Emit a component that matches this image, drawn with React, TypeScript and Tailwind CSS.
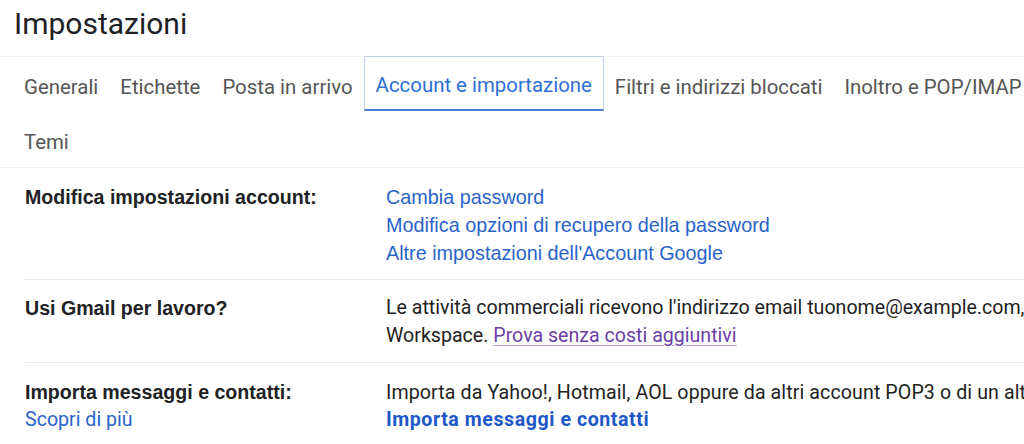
const tabs = [
  "Generali",
  "Etichette",
  "Posta in arrivo",
  "Account e importazione",
  "Filtri e indirizzi bloccati",
  "Inoltro e POP/IMAP",
  "Temi",
];

const ACTIVE = "Account e importazione";

const Label = ({ children }: { children: React.ReactNode }) => (
  <div className="w-[361px] shrink-0 font-['Liberation_Sans',Arial,sans-serif] text-[19.6px] font-bold text-[#202124]">
    {children}
  </div>
);

export default function App() {
  return (
    <div className="w-[1024px] h-[444px] overflow-hidden bg-white font-['Roboto',Arial,sans-serif]">
      <h1 className="pl-[14px] pt-[4px] h-[56px] text-[30px] leading-[40px] text-[#202124]">Impostazioni</h1>

      <div className="border-t border-b border-[#f0f0f0]">
        <div className="flex flex-wrap pl-[13px] w-[1080px]">
          {tabs.map((t) => (
            <div
              key={t}
              className={
                t === ACTIVE
                  ? "px-[11px] pt-[5px] h-[55px] flex items-center text-[20.4px] whitespace-nowrap text-[#2f6fd6] border-x border-t border-[#c5d3ea] border-b-2 border-b-[#4a7fd6] -mt-px"
                  : "px-[11px] pt-[5px] h-[55px] flex items-center text-[20.4px] whitespace-nowrap text-[#555]"
              }
            >
              {t}
            </div>
          ))}
        </div>
      </div>

      <div className="pl-[25px] text-[19.6px] leading-[28px]">
        <div className="flex pt-[15px] pb-[12px] border-b border-[#e8e8e8]">
          <Label>Modifica impostazioni account:</Label>
          <div className="flex flex-col font-['Liberation_Sans',Arial,sans-serif] text-[19.8px] text-[#2a63c9]">
            <span>Cambia password</span>
            <span>Modifica opzioni di recupero della password</span>
            <span>Altre impostazioni dell'Account Google</span>
          </div>
        </div>

        <div className="flex pt-[14px] pb-[12px] border-b border-[#e8e8e8]">
          <Label>Usi Gmail per lavoro?</Label>
          <div className="whitespace-nowrap text-[#222]">
            <div>Le attività commerciali ricevono l'indirizzo email tuonome@example.com, con Google</div>
            <div>
              Workspace.{" "}
              <span className="text-[#6b3fa8] underline decoration-[#b69bd6] underline-offset-[3px]">
                Prova senza costi aggiuntivi
              </span>
            </div>
          </div>
        </div>

        <div className="flex pt-[16px] leading-[27px]">
          <div className="w-[361px] shrink-0 flex flex-col">
            <span className="font-['Liberation_Sans',Arial,sans-serif] font-bold text-[#202124]">Importa messaggi e contatti:</span>
            <span className="text-[#2a63c9]">Scopri di più</span>
          </div>
          <div className="whitespace-nowrap text-[#222]">
            <div className="tracking-[0.1px]">Importa da Yahoo!, Hotmail, AOL oppure da altri account POP3 o di un altro provider.</div>
            <div className="font-bold tracking-[0.55px] text-[#1d57c8]">Importa messaggi e contatti</div>
          </div>
        </div>
      </div>
    </div>
  );
}
